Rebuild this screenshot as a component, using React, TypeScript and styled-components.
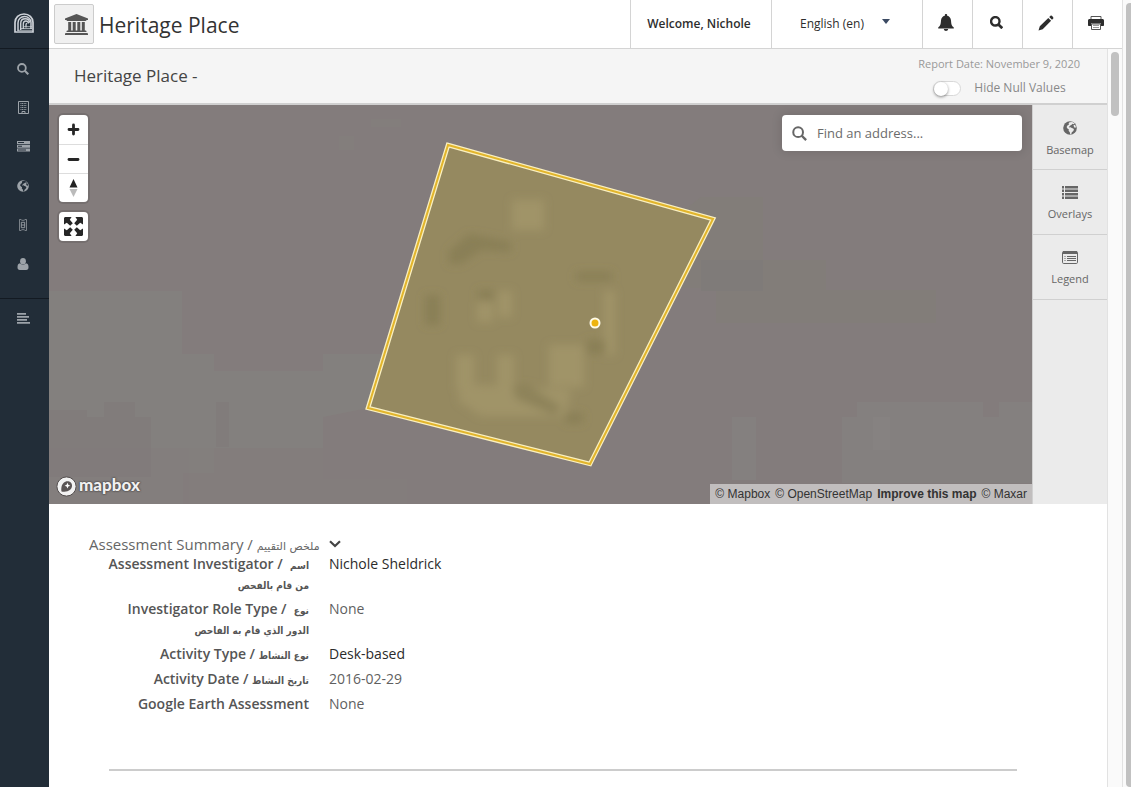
import React, { useState } from "react";
import styled, { createGlobalStyle, css } from "styled-components";

const GlobalStyle = createGlobalStyle`
  *, *::before, *::after { box-sizing: border-box; }
  body {
    margin: 0;
    background: #fff;
    color: #444;
    font-family: "Open Sans", "DejaVu Sans", sans-serif;
    font-size: 14px;
    line-height: 20px;
  }
  button, input, select { font: inherit; color: inherit; }
  button { padding: 0; border: 0; background: none; cursor: pointer; }
  a { color: inherit; text-decoration: none; }
  svg { display: block; flex: none; }
`;

const Page = styled.div`
  display: flex;
  height: 100vh;
  overflow: hidden;
`;

const Sidebar = styled.nav`
  display: flex;
  flex-direction: column;
  flex: none;
  width: 49px;
  background: #222d38;
  color: #9da3a9;
`;

const SideGroup = styled.div<{ $brand?: boolean; $ruled?: boolean }>`
  display: flex;
  flex-direction: column;
  padding-bottom: ${(p) => (p.$ruled ? 15 : 0)}px;
  border-bottom: ${(p) => (p.$brand || p.$ruled ? "1px solid #131a22" : "0")};
`;

const SideLink = styled.a<{ $tall?: boolean }>`
  display: flex;
  align-items: center;
  justify-content: center;
  height: ${(p) => (p.$tall ? 48 : 39)}px;
  padding-right: ${(p) => (p.$tall ? 2 : 3)}px;
  padding-bottom: ${(p) => (p.$tall ? 2 : 0)}px;
`;

const Main = styled.div`
  display: flex;
  flex-direction: column;
  flex: 1;
  min-width: 0;
`;

const Header = styled.header`
  display: flex;
  flex: none;
  height: 49px;
  border-bottom: 1px solid #d4d4d4;
  background: #fff;
`;

const Brand = styled.div`
  display: flex;
  align-items: center;
  flex: 1;
  gap: 5px;
  padding-left: 5px;
`;

const BrandIcon = styled.span`
  display: flex;
  align-items: center;
  justify-content: center;
  width: 40px;
  height: 40px;
  padding: 1px 0 0 4px;
  border: 1px solid #ccc;
  border-radius: 2px;
  background: #f0f0f0;
  color: #555;
`;

const PageTitle = styled.h1`
  margin: 0;
  padding-top: 1px;
  color: #333;
  font-size: 21px;
  font-weight: 400;
  line-height: 28px;
`;

const headerCell = css`
  display: flex;
  align-items: center;
  justify-content: center;
  border-left: 1px solid #d4d4d4;
  color: #2d2d2d;
`;

const Welcome = styled.div`
  ${headerCell}
  width: 141px;
  padding-right: 4px;
  font-size: 12px;
  font-weight: 600;
`;

const Language = styled.div`
  ${headerCell}
  position: relative;
  width: 151px;
`;

const LanguageSelect = styled.select`
  width: 100%;
  height: 47px;
  padding: 0 48px 0 28px;
  border: 0;
  appearance: none;
  background: transparent;
  font-size: 12px;
`;

const Caret = styled.svg`
  position: absolute;
  top: 19px;
  right: 32px;
  pointer-events: none;
`;

const HeaderButton = styled.button`
  ${headerCell}
  width: 50px;
  padding: 0 3px 3px 0;
  border-left: 1px solid #d4d4d4;
`;

const ReportArea = styled.div`
  display: flex;
  flex: 1;
  min-height: 0;
`;

const Report = styled.main`
  flex: 1;
  min-width: 0;
  overflow: hidden;
`;

const Track = styled.div<{ $page?: boolean }>`
  flex: none;
  width: ${(p) => (p.$page ? 9 : 15)}px;
  padding: 3px 0 0 3px;
  border-left: 1px solid #e2e2e2;
  background: #fafafa;
`;

const Thumb = styled.div<{ $page?: boolean }>`
  width: 8px;
  height: ${(p) => (p.$page ? "100%" : "64px")};
  border-radius: 4px;
  background: #c1c1c1;
`;

const ReportBar = styled.div`
  display: flex;
  justify-content: space-between;
  height: 56px;
  padding: 5px 27px 0 25px;
  border-bottom: 2px solid #d0d0d0;
  background: #f5f5f5;
`;

const ReportName = styled.h2`
  margin: 0;
  padding-top: 9px;
  font-size: 17px;
  font-weight: 400;
  line-height: 26px;
`;

const ReportMeta = styled.div`
  display: flex;
  flex-direction: column;
  gap: 4px;
  color: #999;
  font-size: 11px;
`;

const ToggleLabel = styled.label`
  display: flex;
  align-items: center;
  gap: 13px;
  padding-left: 15px;
  color: #888;
  font-size: 12px;
`;

const Toggle = styled.input`
  appearance: none;
  display: flex;
  width: 28px;
  height: 15px;
  margin: 0;
  border: 1px solid #d8d8d8;
  border-radius: 8px;
  background: #fff;
  &::before {
    content: "";
    width: 14px;
    height: 14px;
    border-radius: 50%;
    background: #fff;
    box-shadow: 0 1px 3px rgba(0, 0, 0, 0.45);
  }
  &:checked { justify-content: flex-end; }
`;

const MapSection = styled.section`
  display: flex;
  height: 399px;
`;

const MapCanvas = styled.div`
  position: relative;
  flex: 1;
  overflow: hidden;
  background: #837c7c;
`;

const MapImage = styled.svg`
  position: absolute;
  inset: 0;
  width: 100%;
  height: 100%;
`;

const MapControls = styled.div`
  position: absolute;
  top: 10px;
  left: 10px;
  display: flex;
  flex-direction: column;
  gap: 10px;
`;

const ControlGroup = styled.div`
  overflow: hidden;
  width: 29px;
  border-radius: 4px;
  background: #fff;
  box-shadow: 0 0 0 2px rgba(0, 0, 0, 0.1);
`;

const ControlButton = styled.button`
  display: flex;
  align-items: center;
  justify-content: center;
  width: 29px;
  height: 29px;
  color: #262626;
  & + & { border-top: 1px solid #ddd; }
`;

const AddressSearch = styled.label`
  position: absolute;
  top: 10px;
  right: 10px;
  display: flex;
  align-items: center;
  gap: 10px;
  width: 240px;
  height: 36px;
  padding: 0 10px;
  border-radius: 4px;
  background: #fff;
  color: #666;
  box-shadow: 0 0 10px 2px rgba(0, 0, 0, 0.1);
`;

const AddressInput = styled.input`
  flex: 1;
  min-width: 0;
  padding: 0;
  border: 0;
  outline: 0;
  background: transparent;
  font-size: 13px;
  &::placeholder { color: #6b6b6b; opacity: 1; }
`;

const MapLogo = styled.a`
  position: absolute;
  bottom: 7px;
  left: 7px;
  display: flex;
  align-items: center;
  gap: 2px;
  color: #f0f0f0;
  font-family: Lato, sans-serif;
  font-size: 17px;
  font-weight: 900;
  text-shadow: 0 0 2px #4c4848, 0 0 2px #4c4848, 0 0 1px #4c4848;
`;

const MapLogoText = styled.span`
  padding-bottom: 2px;
`;

const Attribution = styled.div`
  position: absolute;
  right: 0;
  bottom: 0;
  display: flex;
  gap: 5px;
  padding: 0 5px;
  background: rgba(255, 255, 255, 0.5);
  color: #333;
  font-family: "Liberation Sans", Arial, sans-serif;
  font-size: 12px;
`;

const Improve = styled.a`
  font-weight: 700;
`;

const MapTools = styled.aside`
  flex: none;
  width: 75px;
  border-left: 1px solid #d0d0d0;
  background: #ebebeb;
`;

const MapTool = styled.button`
  display: flex;
  flex-direction: column;
  align-items: center;
  gap: 5px;
  width: 100%;
  height: 65px;
  padding-top: 16px;
  border-bottom: 1px solid #d0d0d0;
  color: #666;
  font-size: 11px;
`;

const Details = styled.section`
  padding: 30px 90px 0 40px;
`;

const SectionTitle = styled.button`
  display: flex;
  align-items: center;
  gap: 9px;
  height: 20px;
  color: #666;
  font-size: 15px;
  line-height: 20px;
`;

const Fields = styled.dl`
  display: flex;
  flex-direction: column;
  gap: 5px;
  margin: 0;
`;

const Field = styled.div`
  display: flex;
  gap: 20px;
`;

const FieldName = styled.dt`
  width: 220px;
  color: #555;
  font-weight: 600;
  text-align: right;
`;

const FieldValue = styled.dd<{ $link?: boolean }>`
  margin: 0;
  color: ${(p) => (p.$link ? "#2b2b2b" : "#5f5f5f")};
`;

const Arabic = styled.span<{ $strong?: boolean }>`
  font-family: ${(p) => (p.$strong ? '"DejaVu Sans Condensed", ' : "")}"DejaVu Sans", sans-serif;
  font-size: ${(p) => (p.$strong ? 10 : 11)}px;
  line-height: 1;
`;

const Line = styled.span`
  display: block;
  height: 20px;
  white-space: pre;
`;

const Divider = styled.hr`
  height: 2px;
  margin: 55px 0 0 20px;
  border: 0;
  background: #ccc;
`;

const ArchLogo = () => (
  <svg width="20" height="20" viewBox="0 0 20 20" fill="none" stroke="#ccd1d7">
    <path d="M1 19V9.500C1 4.500 5 1 10 1s9 3.500 9 8.500V19z" strokeWidth="1.700" />
    <path d="M4 18V10c0-4 3-6.500 6.500-6.500S17 6 17 9.500V16" strokeWidth="1.500" />
    <path d="M6.700 17v-6.500c0-3 2-4.700 4.500-4.700s4.300 1.700 4.300 4" strokeWidth="1.400" />
    <path d="M9.300 16v-5c0-2 1-3 2.600-3s2.600 1 2.600 2.500M12 14.500v-2.800c0-1 .5-1.400 1.200-1.400" strokeWidth="1.300" />
    <path d="M4 17.300h14M7 15.500h11M10 13.700h8" strokeWidth="1" opacity=".75" />
  </svg>
);

const MagnifierIcon = ({ size, weight = 2 }: { size: number; weight?: number }) => (
  <svg width={size} height={size} viewBox="0 0 12 12" fill="none" stroke="currentColor" strokeWidth={weight}>
    <circle cx="4.900" cy="4.900" r="3.900" />
    <path d="M7.800 7.800l3.500 3.500" strokeWidth={weight + 0.3} />
  </svg>
);

const BuildingIcon = () => (
  <svg width="11" height="13" viewBox="0 0 11 13" fill="none" stroke="currentColor">
    <path d="M.5.500h10v12H.5z" />
    <path d="M2.500 2.500h6M2.500 4.500h6M2.500 6.500h6M2.500 8.500h6" strokeDasharray="1 .6" />
    <path d="M4 12v-1.500h3V12" />
  </svg>
);

const ServerIcon = () => (
  <svg width="13" height="11" viewBox="0 0 13 11" fill="currentColor">
    <path fillRule="evenodd" d="M0 0h13v3H0zM1 1v1h6V1zM0 3.800h13v3H0zM1 4.800v1h4v-1zM0 7.600h13v3H0zM1 8.600v1h8v-1z" />
  </svg>
);

const GlobeIcon = ({ size, land }: { size: number; land: string }) => (
  <svg width={size} height={size} viewBox="0 0 14 14">
    <circle cx="7" cy="7" r="6.800" fill="currentColor" />
    <path
      fill={land}
      d="M6.500 1.200 9.300.900l2.400 1.700-.9.600-1.300-.4-.8.900-1 .3-.6 1-1 .5.200 1.100 1.400-.4 1 .9 1.600.5.700 1.200-.9 1.500-1.300 1-.5 1.700-1 .5-.5-2.300-1.200-1.400.3-1.400-1.500-1L3.600 6l.8-1.600L6 3.500l-.4-1.200z"
    />
    <path fill={land} d="M10.500 4.200l1.500-.5.900 1.800-.5 1.600-1.300-.9z" />
  </svg>
);

const TicketIcon = () => (
  <svg width="8" height="12" viewBox="0 0 8 12" fill="none" stroke="currentColor" strokeWidth=".9">
    <path d="M.5.500h1.500c.4 1.200 3.600 1.200 4 0h1.500v11H6c-.4-1.200-3.600-1.200-4 0H.5z" opacity=".8" />
    <path d="M2.300 3.300h3.400v5.400H2.300zM2.300 6h3.400" />
  </svg>
);

const UserIcon = () => (
  <svg width="12" height="12" viewBox="0 0 12 12" fill="currentColor">
    <ellipse cx="6" cy="3.300" rx="2.900" ry="3.200" />
    <path d="M3 5.300C1 5.700.5 7 .5 9.300.5 11 1.300 12 2.800 12h6.400c1.500 0 2.300-1 2.300-2.700 0-2.300-.5-3.600-2.500-4C7.600 7.200 4.400 7.200 3 5.300z" />
  </svg>
);

const LinesIcon = () => (
  <svg width="13" height="11" viewBox="0 0 13 11" fill="currentColor">
    <path d="M0 0h9v1.800H0zM0 3h12v1.800H0zM0 6h10v1.800H0zM0 9h13v1.800H0z" />
  </svg>
);

const TempleIcon = () => (
  <svg width="23" height="22" viewBox="0 0 23 22" fill="currentColor">
    <path d="M11.500 0 23 4.600V6h-1.500c0 .5-.4.900-.9.900H2.400c-.5 0-.9-.4-.9-.9H0V4.600zM3.200 8h3v8.500h1.500V8h3v8.500h1.600V8h3v8.500h1.500V8h3v8.500h.8c.5 0 .9.400.9.900v.7H1.500v-.7c0-.5.4-.9.900-.9h.8zM.9 19h21.200c.5 0 .9.400.9.900V21H0v-1.100c0-.5.4-.9.900-.9z" />
  </svg>
);

const BellIcon = () => (
  <svg width="16" height="17" viewBox="0 0 16 17" fill="currentColor">
    <path d="M8 0c.7 0 1.200.5 1.200 1.200v.5c2.300.5 3.600 2.300 3.800 4.700.3 4 .6 5 2.800 7v1H.2v-1c2.200-2 2.500-3 2.800-7C3.200 4 4.500 2.200 6.800 1.700v-.5C6.800.5 7.300 0 8 0zM5.800 15h4.400c-.2 1.200-1 2-2.200 2s-2-.8-2.200-2z" />
  </svg>
);

const PencilIcon = () => (
  <svg width="16" height="16" viewBox="0 0 16 16" fill="currentColor">
    <path d="M12.600.700c.8-.6 3.300 1.800 2.700 2.700l-1.300 1.400L11.200 2zM10.300 2.900l2.800 2.800-8.400 8.500L.5 15.500l1.300-4.200z" />
  </svg>
);

const PrinterIcon = () => (
  <svg width="16" height="14" viewBox="0 0 16 14" fill="none">
    <path d="M3 3V.500h10V3" stroke="#555" />
    <path d="M1.500 3h13c.8 0 1.500.7 1.500 1.500V9c0 .6-.4 1-1 1h-2V7.500H3V10H1c-.6 0-1-.4-1-1V4.500C0 3.700.7 3 1.500 3z" fill="currentColor" />
    <path d="M3.500 8h9v5.500h-9z" fill="#fff" stroke="#555" />
    <path d="M5 9.500h6M5 11.500h6" stroke="#999" />
  </svg>
);

const PlusIcon = () => (
  <svg width="13" height="13" viewBox="0 0 13 13" stroke="currentColor" strokeWidth="2.800" strokeLinecap="round">
    <path d="M6.500 2v9M2 6.500h9" />
  </svg>
);

const MinusIcon = () => (
  <svg width="13" height="13" viewBox="0 0 13 13" stroke="currentColor" strokeWidth="2.800" strokeLinecap="round">
    <path d="M2 6.500h9" />
  </svg>
);

const CompassIcon = () => (
  <svg width="9" height="18" viewBox="0 0 9 18">
    <path d="M.5 8.500 4.500 0l4 8.500z" fill="#222" />
    <path d="M.5 10h8l-4 8z" fill="#bbb" />
  </svg>
);

const ExpandIcon = () => (
  <svg width="19" height="19" viewBox="0 0 19 19" fill="currentColor">
    <path d="M1.500 0h6.100L5.800 2.800l3 3.400-2.600 2.600-3.400-3L0 7.600V1.500C0 .6.600 0 1.500 0z" />
    <path d="M17.500 0h-6.100l1.800 2.800-3 3.400 2.600 2.600 3.400-3L19 7.600V1.500c0-.9-.6-1.500-1.500-1.500z" />
    <path d="M1.500 19h6.100l-1.800-2.800 3-3.400-2.600-2.600-3.400 3L0 11.400v6.100c0 .9.600 1.500 1.500 1.500z" />
    <path d="M17.500 19h-6.100l1.800-2.800-3-3.400 2.600-2.600 3.400 3 2.800-1.800v6.100c0 .9-.6 1.500-1.500 1.500z" />
  </svg>
);

const ListIcon = () => (
  <svg width="16" height="13" viewBox="0 0 16 13" fill="currentColor">
    <path d="M0 0h2v2.400H0zM3 0h13v2.400H3zM0 3.500h2v2.400H0zM3 3.500h13v2.400H3zM0 7h2v2.400H0zM3 7h13v2.400H3zM0 10.500h2v2.400H0zM3 10.500h13v2.400H3z" />
  </svg>
);

const LegendIcon = () => (
  <svg width="16" height="13" viewBox="0 0 16 13" fill="none" stroke="currentColor">
    <rect x=".5" y=".5" width="15" height="12" rx="1.200" />
    <path d="M1 1.500h14" strokeWidth="3" />
    <path d="M2.500 5.500h1M5 5.500h9M2.500 7.500h1M5 7.500h9M2.500 9.500h1M5 9.500h9" />
  </svg>
);

const PinLogo = () => (
  <svg width="21" height="21" viewBox="0 0 21 21">
    <circle cx="10.500" cy="10.500" r="9.600" fill="#f2f2f2" stroke="#555050" strokeWidth="1" />
    <path d="M5.500 15.400s-1.100-5.500 2-8.500c2.200-2.200 5.600-2 7.300-.3s1.800 4.900-.4 7c-3.200 3.200-8.900 1.800-8.900 1.800z" fill="#5a5555" />
    <path d="m11.500 6.800.8 2 2 .9-2 .8-.8 2-.9-2-2-.8 2-.9z" fill="#fff" />
  </svg>
);

const ChevronIcon = () => (
  <svg width="12" height="8" viewBox="0 0 12 8" fill="none" stroke="#444" strokeWidth="2.200">
    <path d="m1 1.200 5 4.800 5-4.800" />
  </svg>
);

const SatelliteView = () => (
  <MapImage viewBox="0 0 983 399" preserveAspectRatio="xMidYMid slice">
    <defs>
      <filter id="soft" x="-10%" y="-10%" width="120%" height="120%">
        <feGaussianBlur stdDeviation="4" />
      </filter>
    </defs>
    <g fill="#83807e">
      <path d="M0 186h133v63h32v17h109v-17h90v54H319l-45 9v31H0z" />
      <path d="M0 303h165v65h-31v31H0z" opacity=".5" />
      <path d="M140 343h134v31h84v25H140z" opacity=".35" />
    </g>
    <path d="M0 305h38v7H0zM55 297h31v15h-31zM0 312h102v60H0zM167 297h13v45h-13z" fill="#817a79" opacity=".6" />
    <path d="M652 92h62v63h63v30h110v33H667v-35h-60v-56z" fill="#827d79" />
    <path d="M652 155h62v31h-62z" fill="#7f7b79" />
    <path d="M322 14h30v8h-30zM290 31h15v14h-15z" fill="#84807d" opacity=".6" />
    <path d="M808 297h126v15h16v-15h33v81H793v-66h15zM683 312h24v63h-24z" fill="#858180" opacity=".85" />
    <path d="M824 312h17v33h-17z" fill="#868281" />
    <path d="M399 40 665 114 541 359 319 303z" fill="#958960" />
    <g filter="url(#soft)">
      <g fill="#a69a6c" opacity=".65">
        <path d="M463 95h32v30h-32zM428 197h16v20h-16zM449 186h14v26h-14zM555 186h11v64h-11z" />
        <path d="M407 250h18v35h-18zM448 250h17v35h-17zM500 240h35v42h-35z" />
        <path d="M410 280h22l90 5-6 26h-84l-22-15z" />
      </g>
      <g fill="#837950" opacity=".6">
        <path d="M400 146l20-17 12 2 30 6v10l-30-2-20 14h-12z" />
        <path d="M376 190h15v30h-15zM429 185h16v10h-16zM527 167h36v9h-36zM537 235h20v14h-20z" />
        <path d="M463 281l16-1 34 22-8 8-38-16zM516 308h18v10h-18z" />
      </g>
    </g>
    <path d="M399 40 664 114 541 359 319 303z" fill="none" stroke="#faf0c0" strokeWidth="4.500" />
    <path d="M399 40 664 114 541 359 319 303z" fill="none" stroke="#e2b52b" strokeWidth="2" />
    <circle cx="546" cy="218" r="4.500" fill="#eeb40e" stroke="#fffbe8" strokeWidth="2" />
  </MapImage>
);

const navItems = [
  { name: "Search", icon: <MagnifierIcon size={12} weight={1.8} /> },
  { name: "Resources", icon: <BuildingIcon /> },
  { name: "Models", icon: <ServerIcon /> },
  { name: "Map layers", icon: <GlobeIcon size={12} land="#222d38" /> },
  { name: "Collections", icon: <TicketIcon /> },
  { name: "Profile", icon: <UserIcon /> },
];

const actions = [
  { name: "Notifications", icon: <BellIcon /> },
  { name: "Search", icon: <MagnifierIcon size={13} weight={2.2} /> },
  { name: "Edit", icon: <PencilIcon /> },
  { name: "Print", icon: <PrinterIcon /> },
];

const mapTools = [
  { name: "Basemap", icon: <GlobeIcon size={14} land="#ebebeb" /> },
  { name: "Overlays", icon: <ListIcon /> },
  { name: "Legend", icon: <LegendIcon /> },
];

const fields = [
  { name: "Assessment Investigator /  ", arabic: ["اسم", "من قام بالفحص"], value: "Nichole Sheldrick", link: true },
  { name: "Investigator Role Type /  ", arabic: ["نوع", "الدور الذي قام به الفاحص"], value: "None" },
  { name: "Activity Type / ", arabic: ["نوع النشاط"], value: "Desk-based", link: true },
  { name: "Activity Date / ", arabic: ["تاريخ النشاط"], value: "2016-02-29" },
  { name: "Google Earth Assessment", arabic: [], value: "None" },
];

export default function App() {
  const [hideNull, setHideNull] = useState(false);
  const [open, setOpen] = useState(true);

  return (
    <Page>
      <GlobalStyle />
      <Sidebar aria-label="Main">
        <SideGroup $brand>
          <SideLink href="#home" aria-label="Home" $tall><ArchLogo /></SideLink>
        </SideGroup>
        <SideGroup $ruled>
          {navItems.map((item) => (
            <SideLink key={item.name} href="#" aria-label={item.name}>{item.icon}</SideLink>
          ))}
        </SideGroup>
        <SideLink href="#report" aria-label="Report"><LinesIcon /></SideLink>
      </Sidebar>

      <Main>
        <Header>
          <Brand>
            <BrandIcon><TempleIcon /></BrandIcon>
            <PageTitle>Heritage Place</PageTitle>
          </Brand>
          <Welcome>Welcome, Nichole</Welcome>
          <Language>
            <LanguageSelect aria-label="Language">
              <option>English (en)</option>
            </LanguageSelect>
            <Caret width="8" height="5" viewBox="0 0 8 5"><path d="M0 0h8L4 5z" fill="#3b4a63" /></Caret>
          </Language>
          {actions.map((action) => (
            <HeaderButton key={action.name} aria-label={action.name}>{action.icon}</HeaderButton>
          ))}
        </Header>

        <ReportArea>
          <Report>
            <ReportBar>
              <ReportName>Heritage Place -</ReportName>
              <ReportMeta>
                <span>Report Date: November 9, 2020</span>
                <ToggleLabel>
                  <Toggle type="checkbox" checked={hideNull} onChange={() => setHideNull(!hideNull)} />
                  Hide Null Values
                </ToggleLabel>
              </ReportMeta>
            </ReportBar>

            <MapSection>
              <MapCanvas>
                <SatelliteView />
                <MapControls>
                  <ControlGroup>
                    <ControlButton aria-label="Zoom in"><PlusIcon /></ControlButton>
                    <ControlButton aria-label="Zoom out"><MinusIcon /></ControlButton>
                    <ControlButton aria-label="Reset north"><CompassIcon /></ControlButton>
                  </ControlGroup>
                  <ControlGroup>
                    <ControlButton aria-label="Fit to extent"><ExpandIcon /></ControlButton>
                  </ControlGroup>
                </MapControls>
                <AddressSearch>
                  <MagnifierIcon size={15} weight={1.6} />
                  <AddressInput type="text" placeholder="Find an address..." aria-label="Find an address" />
                </AddressSearch>
                <MapLogo href="#mapbox"><PinLogo /><MapLogoText>mapbox</MapLogoText></MapLogo>
                <Attribution>
                  <a href="#mapbox">© Mapbox</a>
                  <a href="#osm">© OpenStreetMap</a>
                  <Improve href="#improve">Improve this map</Improve>
                  <a href="#maxar">© Maxar</a>
                </Attribution>
              </MapCanvas>
              <MapTools>
                {mapTools.map((tool) => (
                  <MapTool key={tool.name}>{tool.icon}<span>{tool.name}</span></MapTool>
                ))}
              </MapTools>
            </MapSection>

            <Details>
              <SectionTitle aria-expanded={open} onClick={() => setOpen(!open)}>
                <span>Assessment Summary / <Arabic lang="ar">ملخص التقييم</Arabic></span>
                <ChevronIcon />
              </SectionTitle>
              {open && (
                <Fields>
                  {fields.map((field) => (
                    <Field key={field.name}>
                      <FieldName>
                        <Line>{field.name}{field.arabic[0] && <Arabic lang="ar" $strong>{field.arabic[0]}</Arabic>}</Line>
                        {field.arabic[1] && <Line><Arabic lang="ar" $strong>{field.arabic[1]}</Arabic></Line>}
                      </FieldName>
                      <FieldValue $link={field.link}>{field.value}</FieldValue>
                    </Field>
                  ))}
                </Fields>
              )}
              <Divider />
            </Details>
          </Report>
          <Track><Thumb /></Track>
        </ReportArea>
      </Main>
      <Track $page><Thumb $page /></Track>
    </Page>
  );
}
